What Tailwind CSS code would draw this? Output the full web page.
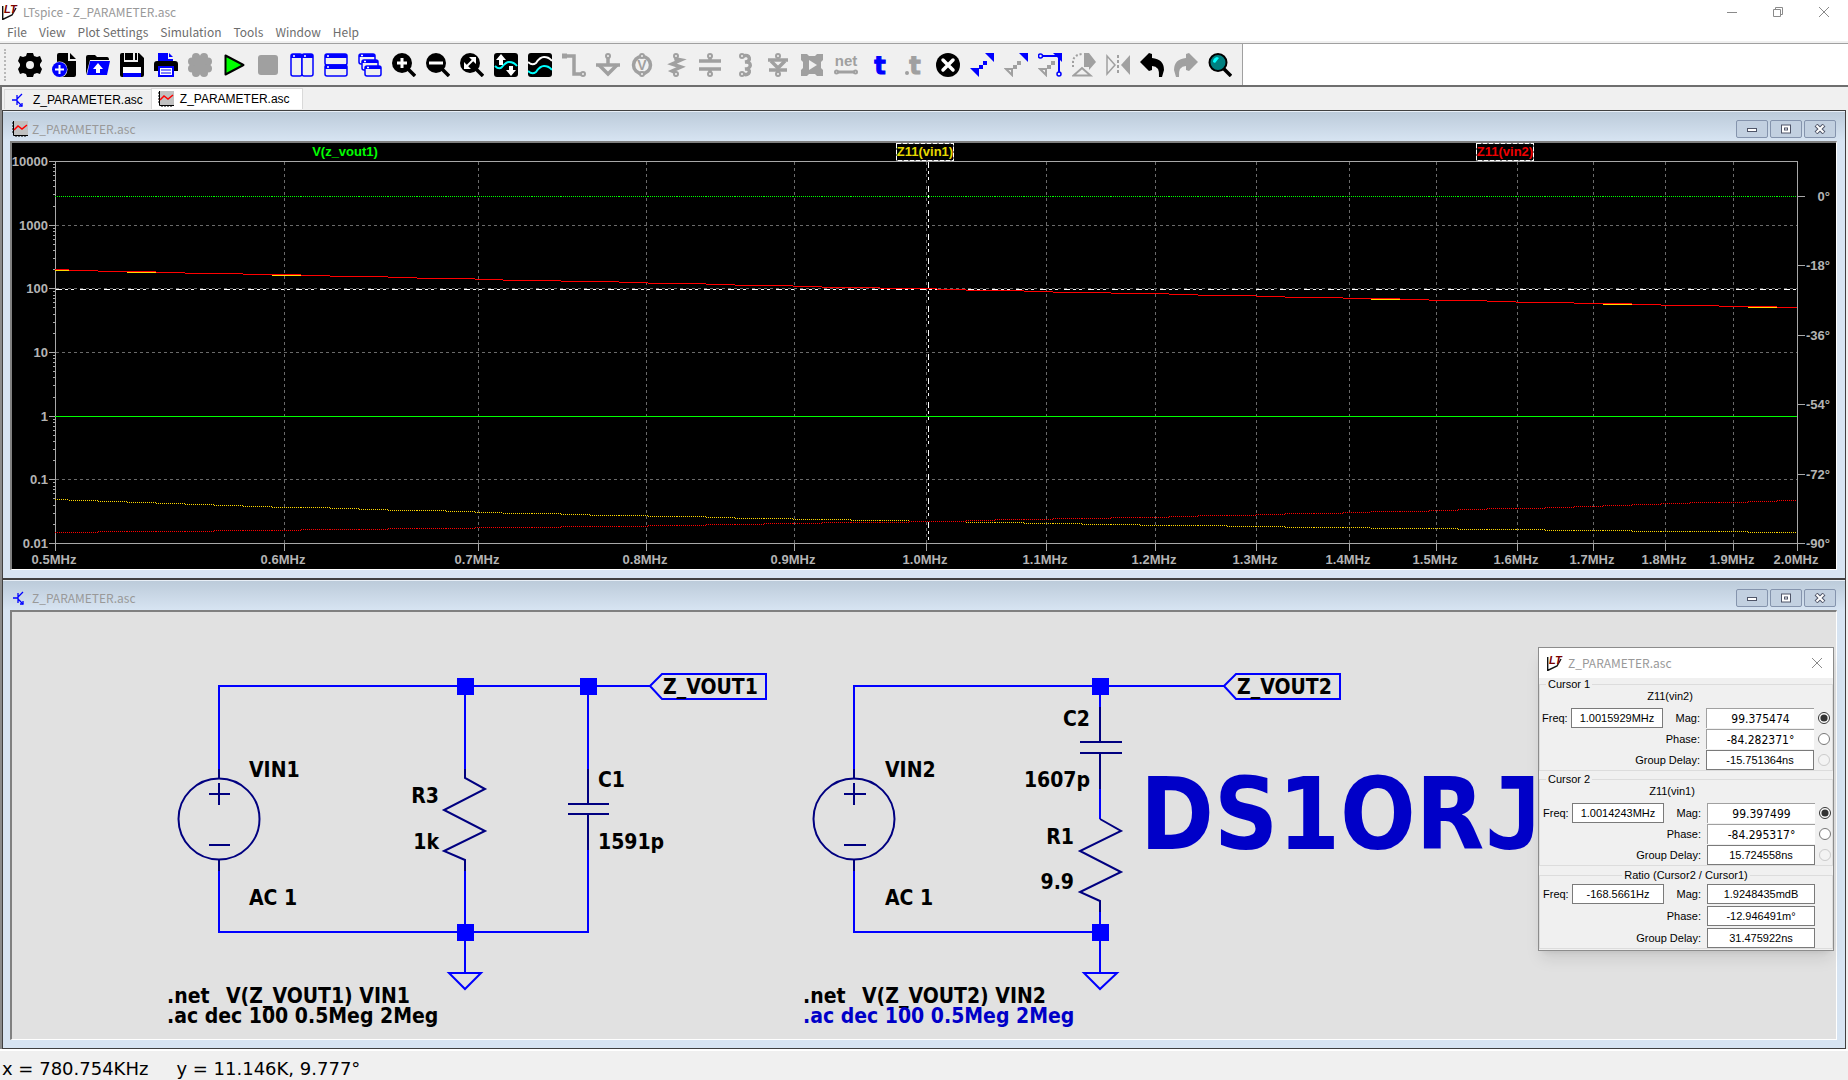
<!DOCTYPE html>
<html lang="en">
  <head>
    <meta charset="UTF-8" />
    <meta name="viewport" content="width=device-width, initial-scale=1.0" />
    <title>LTspice - Z_PARAMETER.asc</title>
    <script src="https://cdn.jsdelivr.net/npm/@tailwindcss/browser@4"></script>
  </head>

  <body class="h-screen flex flex-col overflow-hidden bg-[#f0f0f0] text-black font-['Noto_Sans',sans-serif] text-xs">
    <!-- Title bar -->
    <header class="bg-white shrink-0">
      <div class="h-[23px] flex items-center justify-between text-[#999999]">
        <div class="flex items-center gap-[5px] pl-0.5">
          <svg class="size-4" viewBox="0 0 16 16"><path d="M.7 2V15.500L10 11 14 4" fill="none" stroke="#111" stroke-width="1.4" /><text x="2" y="9" font-family="Liberation Sans" font-size="11" font-weight="700" font-style="italic" fill="#7a0000">LT</text></svg>
          <h1 class="text-xs leading-4 font-['Noto_Sans_CJK_KR',sans-serif]">LTspice - Z_PARAMETER.asc</h1>
        </div>
        <div class="flex gap-[34px] pr-[18px]">
          <button aria-label="Minimize"><svg class="size-3" viewBox="0 0 12 12"><path d="M1 6.500h10" stroke="#8a8a8a" /></svg></button>
          <button aria-label="Restore"><svg class="size-3" viewBox="0 0 12 12" fill="none" stroke="#8a8a8a"><path d="M1.500 3.500h7v7h-7zM3.500 3.500v-2h7v7h-2" /></svg></button>
          <button aria-label="Close"><svg class="size-3" viewBox="0 0 12 12"><path d="M1 1l10 10M11 1L1 11" stroke="#8a8a8a" /></svg></button>
        </div>
      </div>
      <nav class="h-[18px] flex items-center gap-3 pl-[7px] text-xs leading-4 text-[#6d6d6d] font-['Noto_Sans_CJK_KR',sans-serif]">
        <button>File</button>
        <button>View</button>
        <button>Plot Settings</button>
        <button>Simulation</button>
        <button>Tools</button>
        <button>Window</button>
        <button>Help</button>
      </nav>
      <div class="h-[3px] bg-[#f0f0f0] border-b border-[#a0a0a0]"></div>
    </header>

    <!-- Toolbar -->
    <div class="shrink-0 bg-white flex border-b-2 border-[#6e6e6e]">
      <div class="h-[41px] bg-[#f0f0f0] border-r border-[#a0a0a0] flex items-center pl-1 pr-2.5">
        <div class="h-8 border-l-2 border-dotted border-[#b8b8b8] mr-3"></div>
        <div class="flex gap-2.5">
          <button aria-label="Settings"><svg class="size-6" viewBox="0 0 24 24"><path d="M9 0h6l1 3 3 1 3-1 2 5-2 3v2l2 3-2 5-3-1-3 1-1 3H9l-1-3-3-1-3 1-2-5 2-3v-2L0 8l2-5 3 1 3-1z" /><circle cx="12" cy="12" r="4" fill="#f0f0f0" /></svg></button>
          <button aria-label="New schematic"><svg class="size-6" viewBox="0 0 24 24"><path d="M5 2q0-2 2-2h9v8h8v14q0 2-2 2H5zM18 0l6 6h-6z" /><circle cx="7.500" cy="16.500" r="8" fill="#f0f0f0" /><circle cx="7.500" cy="16.500" r="7.500" fill="#00f" /><path d="M7.500 12v9M3 16.500h9" stroke="#fff" stroke-width="2" /></svg></button>
          <button aria-label="Open"><svg class="size-6" viewBox="0 0 24 24"><path d="M0 22V4q0-2 2-2h7l2 2h10q2 0 2 3H4z" /><path d="M4 8h20l-3 14H1z" fill="#00f" /><path d="M12 10l5 6h-3v4h-4v-4H7z" fill="#fff" /></svg></button>
          <button aria-label="Save"><svg class="size-6" viewBox="0 0 24 24"><path d="M0 2q0-2 2-2h17l5 5v17q0 2-2 2H2q-2 0-2-2z" /><path d="M4 0h14v9H4z" fill="#f0f0f0" /><path d="M5 0h8v7H5zM15 0h2v7h-2z" /><path d="M3 14h18v6H3z" fill="#fff" /><path d="M3 20h18v4H3z" fill="#00f" /></svg></button>
          <button aria-label="Print"><svg class="size-6" viewBox="0 0 24 24"><path d="M4 0h10v6h5v2H4zM15 0l4 4h-4z" fill="#00f" /><path d="M0 11q0-3 3-3h18q3 0 3 3v7h-4v-5H4v5H0z" /><path d="M5 14h14v9H5z" fill="#fff" stroke="#00f" stroke-width="2" /><path d="M7 17h10M7 20h10" stroke="#00f" /></svg></button>
          <button aria-label="Pause" disabled><svg class="size-6" viewBox="0 0 24 24"><g fill="#a0a0a0"><circle cx="12" cy="12" r="9.500" /><circle cx="8" cy="4" r="4" /><circle cx="16" cy="4" r="4" /><circle cx="20" cy="8.500" r="4" /><circle cx="20" cy="15.500" r="4" /><circle cx="16" cy="20" r="4" /><circle cx="8" cy="20" r="4" /><circle cx="4" cy="15.500" r="4" /><circle cx="4" cy="8.500" r="4" /></g></svg></button>
          <button aria-label="Run"><svg class="size-6" viewBox="0 0 24 24"><path d="M3.500 2.500v19L21.500 12z" fill="#0f0" stroke="#000" stroke-width="2" stroke-linejoin="round" /></svg></button>
          <button aria-label="Stop" disabled><svg class="size-6" viewBox="0 0 24 24"><rect x="2" y="2" width="20" height="20" rx="3" fill="#a0a0a0" /></svg></button>
          <button aria-label="Tile vertically"><svg class="size-6" viewBox="0 0 24 24" fill="#f0f0f0" stroke="#00f" stroke-width="1.500"><rect x="1" y="1" width="11" height="22" rx="2" /><rect x="12" y="1" width="11" height="22" rx="2" /><path d="M1 3h22" stroke-width="4" /><path d="M3 3h2M14 3h2" stroke="#fff" /></svg></button>
          <button aria-label="Tile horizontally"><svg class="size-6" viewBox="0 0 24 24" fill="#f0f0f0" stroke="#00f" stroke-width="1.500"><rect x="1" y="1" width="22" height="11" rx="2" /><rect x="1" y="12" width="22" height="11" rx="2" /><path d="M1 3h22M1 14h22" stroke-width="4" /><path d="M3 3h2M3 14h2" stroke="#fff" /></svg></button>
          <button aria-label="Cascade"><svg class="size-6" viewBox="0 0 24 24" fill="#f0f0f0" stroke="#00f" stroke-width="1.500"><rect x="1" y="1" width="16" height="10" rx="2" /><path d="M1 2.500h16" stroke-width="3" /><rect x="4" y="7" width="16" height="10" rx="2" /><path d="M4 8.500h16" stroke-width="3" /><rect x="7" y="13" width="16" height="10" rx="2" /><path d="M7 14.500h16" stroke-width="3" /><path d="M3 2.500h2M6 8.500h2M9 14.500h2" stroke="#fff" /></svg></button>
          <button aria-label="Zoom in"><svg class="size-6" viewBox="0 0 24 24"><path d="M15 15l8 8" stroke="#000" stroke-width="3.500" /><circle cx="10" cy="10" r="10" /><path d="M10 5v10M5 10h10" stroke="#fff" stroke-width="3" /></svg></button>
          <button aria-label="Zoom out"><svg class="size-6" viewBox="0 0 24 24"><path d="M15 15l8 8" stroke="#000" stroke-width="3.500" /><circle cx="10" cy="10" r="10" /><path d="M3 10h14" stroke="#fff" stroke-width="3" /></svg></button>
          <button aria-label="Zoom to fit"><svg class="size-6" viewBox="0 0 24 24"><path d="M15 15l8 8" stroke="#000" stroke-width="3.500" /><circle cx="10" cy="10" r="10" /><path d="M6 14l8-8" stroke="#fff" stroke-width="2" /><path d="M9 4h7v7zM4 9v7h7z" fill="#fff" /></svg></button>
          <button aria-label="Autorange"><svg class="size-6" viewBox="0 0 24 24"><rect width="24" height="24" rx="3" /><path d="M1 13q4 4 7 1 4-5 7-5 5 0 8 4" fill="none" stroke="#0ff" stroke-width="2" /><path d="M7 1l5 6H9v5H5V7H2zM17 23l-5-6h3v-4h4v4h3z" fill="#fff" /></svg></button>
          <button aria-label="Add trace"><svg class="size-6" viewBox="0 0 24 24"><rect width="24" height="24" rx="3" /><g fill="none" stroke-width="2"><path d="M0 9q4 4 8 1 4-6 8-6 5 0 8 4" stroke="#fff" /><path d="M0 18q4 4 8 1 4-6 8-6 5 0 8 4" stroke="#0ff" /></g></svg></button>
          <button aria-label="Wire" disabled><svg class="size-6" viewBox="0 0 24 24" fill="none" stroke="#a0a0a0"><path d="M2 3h10v18h8" stroke-width="3.500" /><path d="M0 3h5" stroke-width="5" /><circle cx="21" cy="21" r="2" fill="#f0f0f0" stroke-width="2" /></svg></button>
          <button aria-label="Ground" disabled><svg class="size-6" viewBox="0 0 24 24" fill="none" stroke="#a0a0a0" stroke-width="3.500"><path d="M12 4v8M0 12h24" /><path d="M3 12l9 9 9-9" /><circle cx="12" cy="3" r="2" fill="#f0f0f0" stroke-width="2" /></svg></button>
          <button aria-label="Voltage source" disabled><svg class="size-6" viewBox="0 0 24 24"><circle cx="12" cy="12" r="8.500" fill="none" stroke="#a0a0a0" stroke-width="3.500" /><text x="12" y="17" text-anchor="middle" font-family="Liberation Sans" font-weight="700" font-size="14" fill="#a0a0a0">V</text><g fill="#f0f0f0" stroke="#a0a0a0" stroke-width="2"><circle cx="12" cy="3" r="2" /><circle cx="12" cy="21" r="2" /></g></svg></button>
          <button aria-label="Resistor" disabled><svg class="size-6" viewBox="0 0 24 24" fill="none" stroke="#a0a0a0"><path d="M12 3v3l5 1-9 4 9 3-9 4 4 2" stroke-width="3.500" /><g fill="#f0f0f0" stroke-width="2"><circle cx="12" cy="3" r="2" /><circle cx="12" cy="21" r="2" /></g></svg></button>
          <button aria-label="Capacitor" disabled><svg class="size-6" viewBox="0 0 24 24" fill="none" stroke="#a0a0a0"><path d="M1 8h22M1 16h22M12 3v5M12 16v5" stroke-width="3.500" /><g fill="#f0f0f0" stroke-width="2"><circle cx="12" cy="3" r="2" /><circle cx="12" cy="21" r="2" /></g></svg></button>
          <button aria-label="Inductor" disabled><svg class="size-6" viewBox="0 0 24 24" fill="none" stroke="#a0a0a0"><path d="M11 3c7-3 9 6 2 6 7-1 7 7 0 7 7-1 5 8-2 5" stroke-width="3.500" /><g fill="#f0f0f0" stroke-width="2"><circle cx="10" cy="3" r="2" /><circle cx="10" cy="21" r="2" /></g></svg></button>
          <button aria-label="Diode" disabled><svg class="size-6" viewBox="0 0 24 24" fill="none" stroke="#a0a0a0"><path d="M2 7h20M3 17h18M12 17v4" stroke-width="3.500" /><path d="M5 8l7 7 7-7" stroke-width="3.500" /><g fill="#f0f0f0" stroke-width="2"><circle cx="12" cy="3" r="2" /><circle cx="12" cy="21" r="2" /></g></svg></button>
          <button aria-label="Component" disabled><svg class="size-6" viewBox="0 0 24 24"><path d="M1 1h6l2 2h6l2-2h6v6l-2 2v6l2 2v6h-6l-2-2H9l-2 2H1v-6l2-2V9L1 7z" fill="#a0a0a0" /><path d="M9 7l8 5-8 5z" fill="#f0f0f0" /></svg></button>
          <button aria-label="Label net" disabled><svg class="size-6" viewBox="0 0 24 24"><text x="12" y="13" text-anchor="middle" font-family="Liberation Sans" font-weight="700" font-size="15" fill="#a0a0a0">net</text><path d="M2 19h20" stroke="#a0a0a0" stroke-width="3" /><g fill="#f0f0f0" stroke="#a0a0a0" stroke-width="2"><circle cx="2.500" cy="19" r="1.500" /><circle cx="21.500" cy="19" r="1.500" /></g></svg></button>
          <button aria-label="Text"><svg class="size-6 overflow-visible" viewBox="0 0 24 24"><text x="12" y="21" text-anchor="middle" font-family="DejaVu Sans" font-weight="700" font-size="24" fill="#00f" stroke="#00f">t</text></svg></button>
          <button aria-label="SPICE directive" disabled><svg class="size-6 overflow-visible" viewBox="0 0 24 24"><text x="13" y="21" text-anchor="middle" font-family="DejaVu Sans" font-weight="700" font-size="24" fill="#a0a0a0" stroke="#a0a0a0">t</text><circle cx="5" cy="20" r="2" fill="#a0a0a0" /></svg></button>
          <button aria-label="Delete"><svg class="size-6" viewBox="0 0 24 24"><circle cx="12" cy="12" r="12" /><path d="M7 7l10 10M17 7L7 17" stroke="#fff" stroke-width="3.500" stroke-linecap="round" /></svg></button>
          <button aria-label="Move"><svg class="size-6" viewBox="0 0 24 24" fill="#00f"><path d="M15 0h9v9zM0 15h9v9z" /><path d="M9 12h4v4H9zM13 8h4v4h-4z" /></svg></button>
          <button aria-label="Drag"><svg class="size-6" viewBox="0 0 24 24"><path d="M15 0h9v9z" fill="#00f" /><path d="M2 16h6v6z" fill="none" stroke="#a0a0a0" stroke-width="2" /><path d="M9 12h4v4H9zM13 8h4v4h-4z" fill="#a0a0a0" /></svg></button>
          <button aria-label="Stretch"><svg class="size-6" viewBox="0 0 24 24"><path d="M2 16h6v6z" fill="none" stroke="#a0a0a0" stroke-width="2" /><path d="M9 12h4v4H9zM13 8h4v4h-4z" fill="#a0a0a0" /><path d="M15 0h9v9z" fill="#00f" /><path d="M3 3h18v18" fill="none" stroke="#00f" stroke-width="2" /><g fill="#f0f0f0" stroke="#00f" stroke-width="1.500"><circle cx="2.500" cy="3" r="2" /><circle cx="21" cy="21" r="2" /></g></svg></button>
          <button aria-label="Rotate" disabled><svg class="size-6" viewBox="0 0 24 24"><path d="M12 0h5l7 9-7 8V14h-5z" fill="#a0a0a0" /><path d="M1 14V9q0-7 9-8" fill="none" stroke="#a0a0a0" stroke-width="2" stroke-dasharray="2 2" /><path d="M1.500 22.500h17L10 15z" fill="#f0f0f0" stroke="#a0a0a0" stroke-width="2" /></svg></button>
          <button aria-label="Mirror" disabled><svg class="size-6" viewBox="0 0 24 24"><path d="M24 2v20l-9-10z" fill="#a0a0a0" /><path d="M1 3v18l8-9z" fill="none" stroke="#a0a0a0" stroke-width="1.500" /><path d="M12 2v20" stroke="#a0a0a0" stroke-width="2" stroke-dasharray="3 2" /></svg></button>
          <button aria-label="Undo"><svg class="size-6" viewBox="0 0 24 24"><path d="M0 9l9-9 3 1v4q12 1 12 12l-2 7h-3q1-11-7-11v4l-3 1z" /></svg></button>
          <button aria-label="Redo" disabled><svg class="size-6" viewBox="0 0 24 24"><path d="M24 9l-9-9-3 1v4Q0 6 0 17l2 7h3q-1-11 7-11v4l3 1z" fill="#a0a0a0" /></svg></button>
          <button aria-label="Find"><svg class="size-6" viewBox="0 0 24 24"><path d="M16 16l7 7" stroke="#000" stroke-width="3.500" /><circle cx="10" cy="9.500" r="8.500" fill="#008080" stroke="#000" stroke-width="2" /><path d="M5 9q0-4 4-5l2 1-4 5z" fill="#0ff" /></svg></button>
        </div>
      </div>
    </div>

    <!-- Document tabs -->
    <div role="tablist" class="h-[23px] shrink-0 flex items-start pl-0.5 pt-px text-xs leading-5 font-['Liberation_Sans'] border-l-2 border-[#6e6e6e]">
      <button role="tab" class="h-5 mt-px flex items-center gap-1.5 pl-1.5 pr-2 border-l border-t border-[#d9d9d9]">
        <svg class="size-4" viewBox="0 0 16 16" fill="none" stroke="#00f" stroke-width="1.300"><path d="M1 8h5M6 3v10M6 7l5-5M6 9l5 5" /><path d="M11 11v3H8" /></svg>
        Z_PARAMETER.asc
      </button>
      <button role="tab" aria-selected="true" class="h-[21px] flex items-center gap-1.5 pl-1.5 pr-3 bg-white border border-b-0 border-[#d9d9d9]">
        <svg class="size-4" viewBox="0 0 16 16"><path d="M2 0h14v14H2z" fill="#c0c0c0" /><path d="M1.500 0v14.500H16" fill="none" stroke="#000" /><path d="M0 2h2M0 5h2M0 8h2M0 11h2M4 14v2M7 14v2M10 14v2M13 14v2" stroke="#000" /><path d="M2 9l4-4 4 3 5-4" fill="none" stroke="#f00" stroke-width="1.500" /></svg>
        Z_PARAMETER.asc
      </button>
    </div>

    <!-- MDI area -->
    <main class="relative flex-1 min-h-0 flex flex-col border-l-2 border-[#8a8a8a] mr-0.5">
      <section class="flex-[469] min-h-0 flex flex-col bg-[#d7e4f2] border border-[#404040]">
        <div class="h-[30px] shrink-0 flex items-center justify-between pl-[9px] pr-[9px] bg-linear-to-b from-[#bccbda] to-[#d7e4f2] border-t border-[#e8eff7]">
          <div class="flex items-center gap-1 pt-1">
            <svg class="size-4" viewBox="0 0 16 16"><path d="M2 0h14v14H2z" fill="#c0c0c0" /><path d="M1.500 0v14.500H16" fill="none" stroke="#000" /><path d="M0 2h2M0 5h2M0 8h2M0 11h2M4 14v2M7 14v2M10 14v2M13 14v2" stroke="#000" /><path d="M2 9l4-4 4 3 5-4" fill="none" stroke="#f00" stroke-width="1.500" /></svg>
            <h2 class="text-xs leading-4 text-[#999999] font-['Noto_Sans_CJK_KR',sans-serif]">Z_PARAMETER.asc</h2>
          </div>
          <div class="flex gap-0.5 pt-1">
            <button aria-label="Minimize" class="w-8 h-[18px] grid place-items-center rounded-xs border border-[#8594ad] bg-[#c2d0e0]"><svg class="w-3 h-2" viewBox="0 0 12 8"><rect x="1.500" y="3.500" width="9" height="3" fill="#fff" stroke="#4f5568" /></svg></button>
            <button aria-label="Maximize" class="w-8 h-[18px] grid place-items-center rounded-xs border border-[#8594ad] bg-[#c2d0e0]"><svg class="w-3 h-2.5" viewBox="0 0 12 10"><rect x="1.500" y="1" width="9" height="8" fill="#fff" stroke="#4f5568" /><rect x="4.500" y="4" width="3" height="2" fill="#fff" stroke="#4f5568" /></svg></button>
            <button aria-label="Close" class="w-8 h-[18px] grid place-items-center rounded-xs border border-[#8594ad] bg-[#c2d0e0]"><svg class="w-3 h-2.5" viewBox="0 0 12 10"><path d="M2 1l8 8M10 1L2 9" stroke="#4f5568" stroke-width="4" /><path d="M2.500 1.500l7 7M9.500 1.500l-7 7" stroke="#fff" stroke-width="2" /></svg></button>
          </div>
        </div>
        <div class="flex-1 min-h-0 ml-[7px] mr-2 mb-2 border-t-2 border-l-2 border-t-[#808080] border-l-[#808080] border-b border-r border-b-white border-r-white bg-black">
          <svg id="plot" class="block w-full h-full font-['Liberation_Sans'] font-bold text-[13px]"></svg>
        </div>
      </section>

      <section class="flex-[470] min-h-0 flex flex-col bg-[#d7e4f2] border border-[#404040]">
        <div class="h-[30px] shrink-0 flex items-center justify-between pl-[9px] pr-[9px] bg-linear-to-b from-[#bccbda] to-[#d7e4f2] border-t border-[#e8eff7]">
          <div class="flex items-center gap-1 pt-1">
            <svg class="size-4" viewBox="0 0 16 16" fill="none" stroke="#00f" stroke-width="1.300"><path d="M1 8h5M6 3v10M6 7l5-5M6 9l5 5" /><path d="M11 11v3H8" /></svg>
            <h2 class="text-xs leading-4 text-[#999999] font-['Noto_Sans_CJK_KR',sans-serif]">Z_PARAMETER.asc</h2>
          </div>
          <div class="flex gap-0.5 pt-1">
            <button aria-label="Minimize" class="w-8 h-[18px] grid place-items-center rounded-xs border border-[#8594ad] bg-[#c2d0e0]"><svg class="w-3 h-2" viewBox="0 0 12 8"><rect x="1.500" y="3.500" width="9" height="3" fill="#fff" stroke="#4f5568" /></svg></button>
            <button aria-label="Maximize" class="w-8 h-[18px] grid place-items-center rounded-xs border border-[#8594ad] bg-[#c2d0e0]"><svg class="w-3 h-2.5" viewBox="0 0 12 10"><rect x="1.500" y="1" width="9" height="8" fill="#fff" stroke="#4f5568" /><rect x="4.500" y="4" width="3" height="2" fill="#fff" stroke="#4f5568" /></svg></button>
            <button aria-label="Close" class="w-8 h-[18px] grid place-items-center rounded-xs border border-[#8594ad] bg-[#c2d0e0]"><svg class="w-3 h-2.5" viewBox="0 0 12 10"><path d="M2 1l8 8M10 1L2 9" stroke="#4f5568" stroke-width="4" /><path d="M2.500 1.500l7 7M9.500 1.500l-7 7" stroke="#fff" stroke-width="2" /></svg></button>
          </div>
        </div>
        <div class="flex-1 min-h-0 ml-[7px] mr-2 mb-2 border-t-2 border-l-2 border-t-[#808080] border-l-[#808080] border-b border-r border-b-white border-r-white bg-[#e1e1e1]">
          <!-- Schematic sheet -->
          <svg class="block w-full h-full font-['DejaVu_Sans_Condensed','Open_Sans',sans-serif] font-bold text-[21px]">
            <g transform="translate(-12 -612)">
              <g fill="none" stroke="#0000ff" stroke-width="2">
                <path d="M219 769V686H650M465 686V769M588 686V769M219 871V932H588V850M465 871V973" />
                <path d="M650 686l12-12h104v25H662z" />
                <path d="M449 973h32l-16 16z" />
                <path d="M854 769V686H1224M1100 686V707M1100 789V819M854 871V932H1100M1100 912V973" />
                <path d="M1224 686l12-12h104v25h-104z" />
                <path d="M1084 973h33l-17 16z" />
              </g>
              <g fill="#0000ff">
                <rect x="457" y="678" width="17" height="17" />
                <rect x="580" y="678" width="17" height="17" />
                <rect x="457" y="924" width="17" height="17" />
                <rect x="1092" y="678" width="17" height="17" />
                <rect x="1092" y="924" width="17" height="17" />
              </g>
              <g fill="none" stroke="#000080" stroke-width="2">
                <circle cx="219" cy="819" r="40.500" />
                <path d="M219 769v9M219 860v11M209 794h21M219 783v22M209 845h21" />
                <path d="M465 769v9l20 11-41 21 41 21-41 20 21 9v11" />
                <path d="M588 769v35M568 804h41M568 814h41M588 814v36" />
                <circle cx="854" cy="819" r="40.500" />
                <path d="M854 769v9M854 860v11M844 794h22M854 783v22M844 845h22" />
                <path d="M1100 707v35M1080 742h42M1080 753h42M1100 753v36" />
                <path d="M1100 819l21 12-41 20 41 21-41 20 20 9v11" />
              </g>
              <text x="249" y="777">VIN1</text>
              <text x="249" y="905">AC 1</text>
              <text x="439" y="803" text-anchor="end">R3</text>
              <text x="439" y="849" text-anchor="end">1k</text>
              <text x="598" y="787">C1</text>
              <text x="598" y="849">1591p</text>
              <text x="663" y="694">Z_VOUT1</text>
              <text x="167" y="1003">.net</text>
              <text x="226" y="1003">V(Z_VOUT1) VIN1</text>
              <text x="167" y="1023">.ac dec 100 0.5Meg 2Meg</text>
              <text x="885" y="777">VIN2</text>
              <text x="885" y="905">AC 1</text>
              <text x="1090" y="726" text-anchor="end">C2</text>
              <text x="1090" y="787" text-anchor="end">1607p</text>
              <text x="1074" y="844" text-anchor="end">R1</text>
              <text x="1074" y="889" text-anchor="end">9.9</text>
              <text x="1237" y="694">Z_VOUT2</text>
              <text x="803" y="1003">.net</text>
              <text x="862" y="1003">V(Z_VOUT2) VIN2</text>
              <text x="803" y="1023" fill="#0000c8">.ac dec 100 0.5Meg 2Meg</text>
              <text x="1140" y="849" fill="#0000c8" class="text-[99px]">DS1OR<tspan class="font-['DejaVu_Sans_Mono']">J</tspan></text>
            </g>
          </svg>
        </div>
      </section>

      <!-- Cursor readout -->
      <form class="absolute right-3 bottom-[98px] w-[296px] bg-[#f0f0f0] border border-[#8c8c8c] shadow-lg pb-px font-['Liberation_Sans'] text-[11px] leading-3">
        <div class="h-[30px] bg-white flex items-center justify-between pl-2 pr-2.5">
          <div class="flex items-center gap-[5px]">
            <svg class="size-4" viewBox="0 0 16 16"><path d="M.7 2V15.500L10 11 14 4" fill="none" stroke="#111" stroke-width="1.4" /><text x="2" y="9" font-family="Liberation Sans" font-size="11" font-weight="700" font-style="italic" fill="#7a0000">LT</text></svg>
            <h3 class="text-xs leading-4 text-[#999999] font-['Noto_Sans_CJK_KR',sans-serif]">Z_PARAMETER.asc</h3>
          </div>
          <button type="button" aria-label="Close"><svg class="size-3" viewBox="0 0 12 12"><path d="M1 1l10 10M11 1L1 11" stroke="#8a8a8a" /></svg></button>
        </div>

        <fieldset class="border border-[#dcdcdc] h-[93px]">
          <legend class="ml-1.5 px-0.5">Cursor 1</legend>
          <p class="text-center pr-8 pb-1.5">Z11(vin2)</p>
          <div class="grid grid-cols-[25px_92px_35px_108px_12px] gap-x-1 gap-y-px items-center pl-0.5">
            <label for="f1" class="text-right">Freq:</label>
            <input id="f1" class="h-5 w-full bg-white border border-[#7a7a7a] text-center" value="1.0015929MHz" readonly />
            <label for="m1" class="text-right pr-0.5">Mag:</label>
            <input id="m1" class="h-5 w-full bg-white border-t border-l border-[#a0a0a0] text-center text-xs font-['DejaVu_Sans_Condensed']" value="99.375474" />
            <input type="radio" name="c1" aria-label="Magnitude" class="size-3 accent-[#333333]" checked />
            <label for="p1" class="col-span-3 text-right pr-0.5">Phase:</label>
            <input id="p1" class="h-5 w-full bg-white border-t border-l border-[#a0a0a0] text-center text-xs font-['DejaVu_Sans_Condensed']" value="-84.282371°" />
            <input type="radio" name="c1" aria-label="Phase" class="size-3 accent-[#333333]" />
            <label for="g1" class="col-span-3 text-right pr-0.5">Group Delay:</label>
            <input id="g1" class="h-5 w-full bg-white border border-[#7a7a7a] text-center" value="-15.751364ns" readonly />
            <input type="radio" name="c1" aria-label="Group Delay" class="size-3" disabled />
          </div>
        </fieldset>

        <fieldset class="border border-[#dcdcdc] h-[93px] mt-0.5">
          <legend class="ml-1.5 px-0.5">Cursor 2</legend>
          <p class="text-center pr-7 pb-1.5">Z11(vin1)</p>
          <div class="grid grid-cols-[25px_92px_35px_108px_12px] gap-x-1 gap-y-px items-center pl-[3px]">
            <label for="f2" class="text-right">Freq:</label>
            <input id="f2" class="h-5 w-full bg-white border border-[#7a7a7a] text-center" value="1.0014243MHz" readonly />
            <label for="m2" class="text-right pr-0.5">Mag:</label>
            <input id="m2" class="h-5 w-full bg-white border-t border-l border-[#a0a0a0] text-center text-xs font-['DejaVu_Sans_Condensed']" value="99.397499" />
            <input type="radio" name="c2" aria-label="Magnitude" class="size-3 accent-[#333333]" checked />
            <label for="p2" class="col-span-3 text-right pr-0.5">Phase:</label>
            <input id="p2" class="h-5 w-full bg-white border-t border-l border-[#a0a0a0] text-center text-xs font-['DejaVu_Sans_Condensed']" value="-84.295317°" />
            <input type="radio" name="c2" aria-label="Phase" class="size-3 accent-[#333333]" />
            <label for="g2" class="col-span-3 text-right pr-0.5">Group Delay:</label>
            <input id="g2" class="h-5 w-full bg-white border border-[#7a7a7a] text-center" value="15.724558ns" readonly />
            <input type="radio" name="c2" aria-label="Group Delay" class="size-3" disabled />
          </div>
        </fieldset>

        <fieldset class="border border-[#dcdcdc] mt-[3px]">
          <legend class="mx-auto px-0.5">Ratio (Cursor2 / Cursor1)</legend>
          <div class="grid grid-cols-[25px_92px_35px_108px_12px] gap-x-1 gap-y-0.5 items-center pl-[3px] pt-[3px]">
            <label for="f3" class="text-right">Freq:</label>
            <input id="f3" class="h-5 w-full bg-white border border-[#7a7a7a] text-center" value="-168.5661Hz" readonly />
            <label for="m3" class="text-right pr-0.5">Mag:</label>
            <input id="m3" class="h-5 w-full bg-white border border-[#7a7a7a] text-center" value="1.9248435mdB" readonly />
            <label for="p3" class="col-start-1 col-span-3 text-right pr-0.5">Phase:</label>
            <input id="p3" class="h-5 w-full bg-white border border-[#7a7a7a] text-center" value="-12.946491m°" readonly />
            <label for="g3" class="col-start-1 col-span-3 text-right pr-0.5">Group Delay:</label>
            <input id="g3" class="h-5 w-full bg-white border border-[#7a7a7a] text-center" value="31.475922ns" readonly />
          </div>
        </fieldset>
      </form>
    </main>

    <!-- Status bar -->
    <footer class="h-[31px] shrink-0 border-t-2 border-white flex items-center gap-7 pl-0.5 pt-1.5 text-lg leading-5 font-['DejaVu_Sans',sans-serif]">
      <span>x = 780.754KHz</span>
      <span>y = 11.146K, 9.777°</span>
    </footer>

    <script>
      const svg = document.getElementById("plot");

      const drawPlot = () => {
        const left = 43;
        const right = svg.clientWidth - 39;
        const top = 18;
        const bottom = svg.clientHeight - 26;
        const decade = (bottom - top) / 6;
        const zeroDeg = 53;
        const perDeg = (bottom - zeroDeg) / 90;
        const freqX = (f) => left + ((right - left) * Math.log10(f / 0.5)) / Math.log10(4);
        const magY = (m) => top + (4 - Math.log10(m)) * decade;
        const degY = (d) => zeroDeg - d * perDeg;
        const parts = [];

        const line = (x1, y1, x2, y2, color, dash = "") => {
          const [a, b, c, d] = [x1, y1, x2, y2].map((v) => Math.round(v) + 0.5);
          parts.push(`<path d="M${a} ${b}L${c} ${d}" stroke="${color}" stroke-dasharray="${dash}" />`);
        };
        const text = (x, y, label, color, anchor) => {
          parts.push(`<text x="${Math.round(x)}" y="${Math.round(y)}" fill="${color}" stroke="none" text-anchor="${anchor}">${label}</text>`);
        };

        // 100 points per decade, each one held flat to the next midpoint
        const trace = (fn, color, dash = "") => {
          const half = (right - left) / Math.log10(4) / 200;
          let d = "";
          for (let i = 0; i <= 61; i++) {
            const f = 0.5 * Math.pow(10, i / 100);
            const x1 = Math.max(left, Math.round(freqX(f) - half));
            const x2 = Math.min(right, Math.round(freqX(f) + half));
            if (x2 > x1) d += `M${x1} ${Math.round(fn(f)) + 0.5}H${x2}`;
          }
          parts.push(`<path d="${d}" stroke="${color}" stroke-dasharray="${dash}" />`);
        };

        // grid
        for (let k = 1; k < 6; k++) line(left, top + k * decade, right, top + k * decade, "#6a6a6a", "3 3");
        for (let i = 6; i < 20; i++) line(freqX(i / 10), top, freqX(i / 10), bottom, "#6a6a6a", "3 3");

        // axes
        const axis = "#a8a8a8";
        line(left, top, right, top, axis);
        line(left, bottom, right, bottom, axis);
        line(left, top, left, bottom + 7, axis);
        line(right, top, right, bottom + 7, axis);
        ["10000", "1000", "100", "10", "1", "0.1", "0.01"].forEach((label, k) => {
          const y = top + k * decade;
          line(left - 7, y, left, y, axis);
          text(left - 7, y + 5, label, "#b4b4b4", "end");
          if (k > 0) for (let m = 2; m < 10; m++) {
            const ty = y - Math.log10(m) * decade;
            line(left - 3, ty, left, ty, axis);
          }
        });
        for (let i = 5; i <= 20; i++) {
          const x = freqX(i / 10);
          line(x, bottom, x, bottom + 7, axis);
          text(x - 1, bottom + 21, `${(i / 10).toFixed(1)}MHz`, "#b4b4b4", "middle");
        }
        for (let d = 0; d >= -90; d -= 18) {
          line(right, degY(d), right + 7, degY(d), axis);
          text(right + 33, degY(d) + 5, `${d}°`, "#b4b4b4", "end");
        }

        // impedance of R3 || C1 and of R1 + C2, f in MHz
        const par = (f) => 2 * Math.PI * f * 1e6 * 1000 * 1591e-12;
        const ser = (f) => 1 / (2 * Math.PI * f * 1e6 * 9.9 * 1607e-12);
        const deg = (t) => (-Math.atan(t) * 180) / Math.PI;

        const cx = freqX(1.0015929);
        line(cx, top, cx, bottom, "#ffffff", "6 3 3 3 3 6");
        line(left, magY(99.375), right, magY(99.375), "#ffffff", "6 3 3 3 3 6");

        trace(() => degY(0), "#00ff00", "1 1");
        trace(() => magY(1), "#00ff00");
        trace((f) => degY(deg(par(f))), "#ffd800", "1 1");
        trace((f) => magY(1000 / Math.hypot(1, par(f))), "#ffd800");
        trace((f) => degY(deg(ser(f))), "#ff0000", "1 1");
        trace((f) => magY(9.9 * Math.hypot(1, ser(f))), "#ff0000");

        // trace names
        const third = svg.clientWidth * 0.318;
        const mid = svg.clientWidth / 2 + 1;
        text(mid - third, 13, "V(z_vout1)", "#00ff00", "middle");
        text(mid, 13, "Z11(vin1)", "#e6d800", "middle");
        text(mid + third, 13, "Z11(vin2)", "#ee0000", "middle");
        [mid, mid + third].forEach((x) => {
          const rx = Math.round(x) - 28.5;
          parts.push(`<rect x="${rx}" y="0.5" width="57" height="17" stroke="#808080" />`);
          parts.push(`<rect x="${rx}" y="0.5" width="57" height="17" stroke="#ffffff" stroke-dasharray="4 2" />`);
        });

        svg.innerHTML = `<g fill="none" stroke-width="1" shape-rendering="crispEdges">${parts.join("")}</g>`;
      };

      // redraw whenever the pane changes size
      new ResizeObserver(drawPlot).observe(svg);
    </script>
  </body>
</html>
